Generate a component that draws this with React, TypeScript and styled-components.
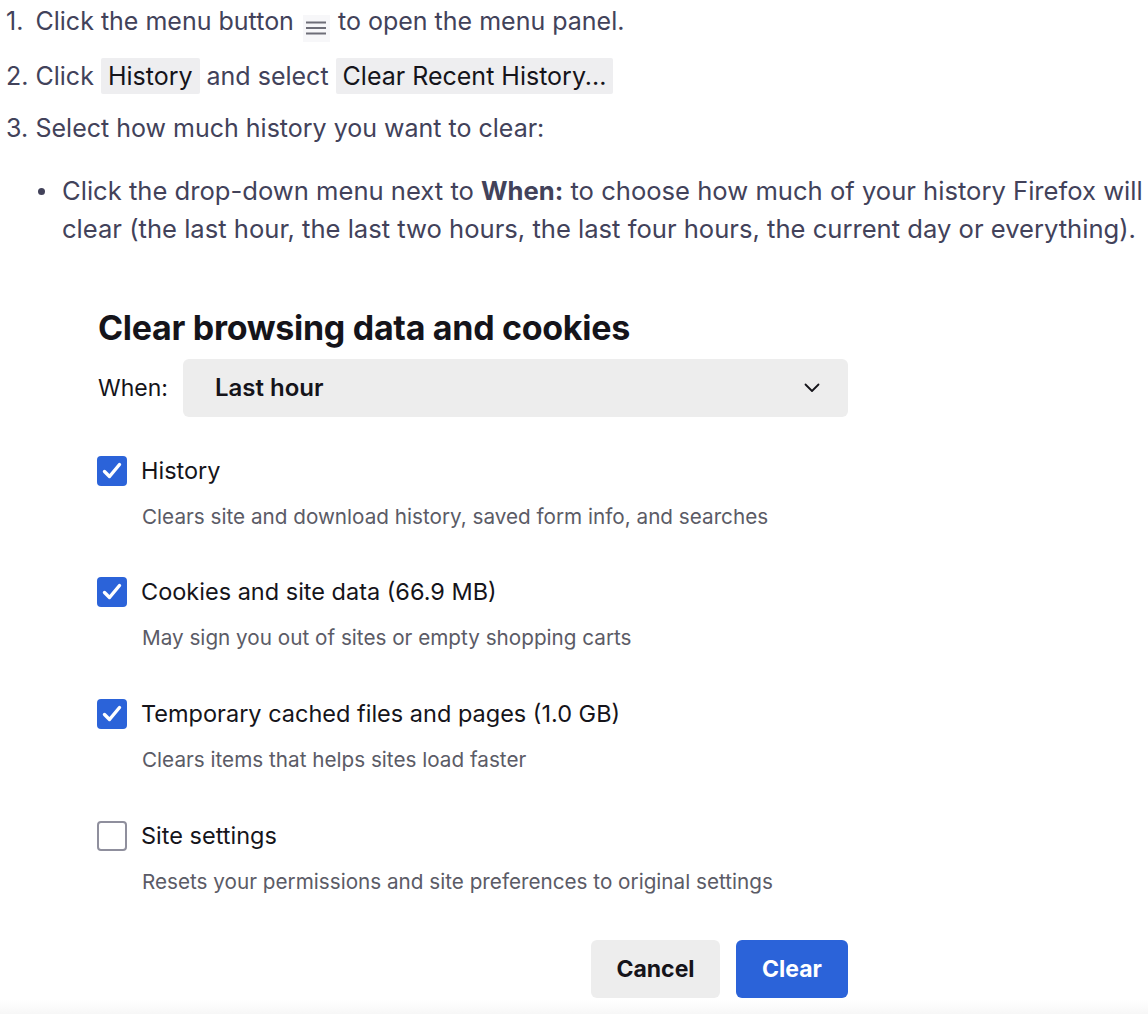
import React from "react";
import styled, { createGlobalStyle } from "styled-components";

const Global = createGlobalStyle`
  html, body { margin: 0; padding: 0; background: #ffffff; }
  body { font-family: Inter, "Noto Sans", sans-serif; }
`;

const Page = styled.div`
  width: 1148px;
  height: 1014px;
  overflow: hidden;
  position: relative;
  background: #ffffff;
  padding-top: 2px;
  box-sizing: border-box;
`;

const Steps = styled.ol`
  list-style: none;
  margin: 0;
  padding: 0 0 0 6px;
  color: #42425a;
  font-size: 25px;
  line-height: 38px;
`;

const Step = styled.li<{ $gap?: number }>`
  margin-top: ${(p) => p.$gap ?? 0}px;
`;

const Marker = styled.span`
  display: inline-block;
  width: 29.5px;
`;

const Chip = styled.span`
  background: #eeeef0;
  color: #15141a;
  padding: 3px 7px;
  border-radius: 2px;
`;

const MenuIcon = styled.span`
  display: inline-flex;
  vertical-align: -6px;
  width: 27px;
  height: 27px;
  margin: 0 1px 0 2px;
  background: #f7f7f9;
  align-items: center;
  justify-content: center;
`;

const Bullets = styled.ul`
  list-style: none;
  margin: 25px 0 0 0;
  padding: 0 0 0 56px;
  font-size: 25.6px;
`;

const Bullet = styled.li`
  position: relative;
  &::before {
    content: "";
    position: absolute;
    left: -24px;
    top: 16px;
    width: 7px;
    height: 7px;
    border-radius: 50%;
    background: #42425a;
  }
`;

const Dialog = styled.section`
  margin: 60px 0 0 97px;
  width: 751px;
  font-family: Inter, "Noto Sans", sans-serif;
  color: #15141a;
`;

const Title = styled.h2`
  margin: 0 0 0 1px;
  font-size: 34px;
  font-weight: 700;
  letter-spacing: -0.3px;
  line-height: 40px;
`;

const WhenRow = styled.div`
  display: flex;
  align-items: center;
  gap: 15px;
  margin-top: 11px;
  padding-left: 1px;
  font-size: 23px;
`;

const Select = styled.div`
  flex: none;
  width: 665px;
  height: 58px;
  box-sizing: border-box;
  background: #ededed;
  border-radius: 6px;
  display: flex;
  align-items: center;
  justify-content: space-between;
  padding: 0 28px 0 32px;
  font-weight: 600;
  font-size: 24px;
`;

const Options = styled.div`
  margin-top: 39px;
  display: flex;
  flex-direction: column;
  gap: 45.7px;
`;

const Option = styled.div`
  display: grid;
  grid-template-columns: 30px 1fr;
  column-gap: 14px;
  row-gap: 16px;
  align-items: center;
`;

const Box = styled.span<{ $on: boolean }>`
  width: 30px;
  height: 30px;
  box-sizing: border-box;
  border-radius: 4px;
  display: flex;
  align-items: center;
  justify-content: center;
  background: ${(p) => (p.$on ? "#2b63d9" : "#ffffff")};
  border: ${(p) => (p.$on ? "none" : "2.5px solid #8f8f9d")};
`;

const Label = styled.span`
  font-size: 23.5px;
  line-height: 30px;
`;

const Desc = styled.span`
  grid-column: 2;
  font-size: 20.7px;
  line-height: 30px;
  color: #5b5b66;
  padding-left: 1px;
`;

const Buttons = styled.div`
  display: flex;
  justify-content: flex-end;
  gap: 16px;
  margin-top: 43px;
`;

const Button = styled.button<{ $primary?: boolean }>`
  height: 58px;
  padding: 0 24px;
  border: none;
  border-radius: 6px;
  font-family: inherit;
  font-size: 23px;
  font-weight: 700;
  background: ${(p) => (p.$primary ? "#2b63d9" : "#ededed")};
  color: ${(p) => (p.$primary ? "#ffffff" : "#15141a")};
  min-width: ${(p) => (p.$primary ? 112 : 129)}px;
`;

const Fade = styled.div`
  position: absolute;
  left: 0;
  right: 0;
  bottom: 0;
  height: 14px;
  background: linear-gradient(#ffffff, #f7f7f7);
`;

const Check = () => (
  <svg width="24" height="24" viewBox="0 0 24 24">
    <path d="M4.5 12.5 L9.5 17.5 L19.5 5.5" fill="none" stroke="#fff" strokeWidth="3.4" strokeLinecap="round" strokeLinejoin="round" />
  </svg>
);

const Hamburger = () => (
  <svg width="20" height="16" viewBox="0 0 20 16">
    <path d="M0 2.5h20M0 8h20M0 13.5h20" stroke="#6e6e78" strokeWidth="2" />
  </svg>
);

const Chevron = () => (
  <svg width="16" height="10" viewBox="0 0 16 10">
    <path d="M1.5 1.5 L8 8 L14.5 1.5" fill="none" stroke="#15141a" strokeWidth="1.8" strokeLinecap="round" strokeLinejoin="round" />
  </svg>
);

const items = [
  { on: true, label: "History", desc: "Clears site and download history, saved form info, and searches" },
  { on: true, label: "Cookies and site data (66.9 MB)", desc: "May sign you out of sites or empty shopping carts" },
  { on: true, label: "Temporary cached files and pages (1.0 GB)", desc: "Clears items that helps sites load faster" },
  { on: false, label: "Site settings", desc: "Resets your permissions and site preferences to original settings" },
];

export default function App() {
  return (
    <Page>
      <Global />
      <Steps>
        <Step>
          <Marker>1.</Marker>Click the menu button <MenuIcon><Hamburger /></MenuIcon> to open the menu panel.
        </Step>
        <Step $gap={15}>
          <Marker>2.</Marker>Click <Chip>History</Chip> and select <Chip>Clear Recent History...</Chip>
        </Step>
        <Step $gap={14}>
          <Marker>3.</Marker>Select how much history you want to clear:
          <Bullets>
            <Bullet>
              Click the drop-down menu next to <b>When:</b> to choose how much of your history Firefox will clear (the last hour, the last two hours, the last four hours, the current day or everything).
            </Bullet>
          </Bullets>
        </Step>
      </Steps>
      <Dialog>
        <Title>Clear browsing data and cookies</Title>
        <WhenRow>
          <span>When:</span>
          <Select>
            <span>Last hour</span>
            <Chevron />
          </Select>
        </WhenRow>
        <Options>
          {items.map((it) => (
            <Option key={it.label}>
              <Box $on={it.on}>{it.on && <Check />}</Box>
              <Label>{it.label}</Label>
              <Desc>{it.desc}</Desc>
            </Option>
          ))}
        </Options>
        <Buttons>
          <Button>Cancel</Button>
          <Button $primary>Clear</Button>
        </Buttons>
      </Dialog>
      <Fade />
    </Page>
  );
}
